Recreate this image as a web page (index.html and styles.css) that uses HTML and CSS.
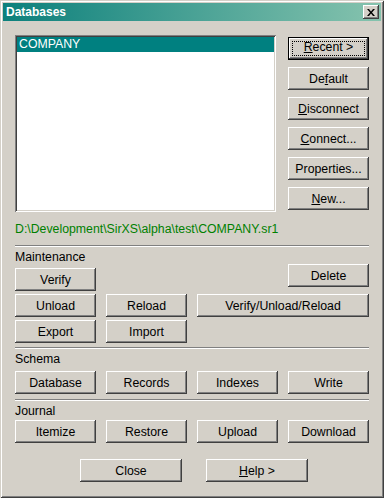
FILE: index.html
```html
<!DOCTYPE html>
<html lang="en">
<head>
    <meta charset="UTF-8">
    <meta name="viewport" content="width=device-width, initial-scale=1.0">
    <title>Databases</title>
    <link rel="stylesheet" href="styles.css">
</head>
<body>
    <div class="window">
        <div class="titlebar">
            <span class="title">Databases</span>
            <button class="close-btn" aria-label="Close">
                <svg width="8" height="7" viewBox="0 0 8 7">
                    <path d="M0 0h2l2 2.5L6 0h2L5 3.5 8 7H6L4 4.5 2 7H0l3-3.5z" fill="#000"/>
                </svg>
            </button>
        </div>

        <div class="content">
            <div class="top">
                <div class="listbox">
                    <div class="list-item selected">COMPANY</div>
                </div>
                <div class="side-buttons">
                    <button class="btn default"><span class="focus"><u>R</u>ecent &gt;</span></button>
                    <button class="btn">De<u>f</u>ault</button>
                    <button class="btn"><u>D</u>isconnect</button>
                    <button class="btn"><u>C</u>onnect...</button>
                    <button class="btn">Properties...</button>
                    <button class="btn"><u>N</u>ew...</button>
                </div>
            </div>

            <div class="path">D:\Development\SirXS\alpha\test\COMPANY.sr1</div>

            <div class="separator sep-first"></div>
            <div class="section-label">Maintenance</div>
            <div class="grid maintenance">
                <button class="btn verify">Verify</button>
                <button class="btn delete">Delete</button>
                <button class="btn">Unload</button>
                <button class="btn">Reload</button>
                <button class="btn wide">Verify/Unload/Reload</button>
                <button class="btn">Export</button>
                <button class="btn">Import</button>
            </div>

            <div class="separator"></div>
            <div class="section-label">Schema</div>
            <div class="grid schema">
                <button class="btn">Database</button>
                <button class="btn">Records</button>
                <button class="btn">Indexes</button>
                <button class="btn">Write</button>
            </div>

            <div class="separator"></div>
            <div class="section-label">Journal</div>
            <div class="grid journal">
                <button class="btn">Itemize</button>
                <button class="btn">Restore</button>
                <button class="btn">Upload</button>
                <button class="btn">Download</button>
            </div>

            <div class="footer">
                <button class="btn big">Close</button>
                <button class="btn big"><u>H</u>elp &gt;</button>
            </div>
        </div>
    </div>
</body>
</html>
```

FILE: styles.css
```css
body {
    margin: 0;
    font-family: 'Liberation Sans', Arial, sans-serif;
    font-size: 12.3px;
    background-color: #d4d0c8;
}

.window {
    width: 384px;
    height: 498px;
    box-sizing: border-box;
    padding: 3px;
    background-color: #d4d0c8;
    box-shadow: inset 1px 1px #d4d0c8, inset -1px -1px #404040,
                inset 2px 2px #ffffff, inset -2px -2px #808080;
    overflow: hidden;
}

.titlebar {
    height: 18px;
    display: flex;
    align-items: center;
    justify-content: space-between;
    padding: 0 2px 0 3px;
    background: linear-gradient(to right, #0c807c, #86c3ae);
}

.title {
    color: #ffffff;
    font-weight: bold;
    font-size: 12px;
}

.close-btn {
    width: 16px;
    height: 14px;
    padding: 0;
    border: none;
    display: flex;
    align-items: center;
    justify-content: center;
    background-color: #d4d0c8;
    box-shadow: inset -1px -1px #404040, inset 1px 1px #ffffff,
                inset -2px -2px #808080, inset 2px 2px #d4d0c8;
}

.content {
    padding: 0 12px;
}

.top {
    display: flex;
    justify-content: space-between;
    margin-top: 14px;
}

.listbox {
    width: 261px;
    height: 177px;
    box-sizing: border-box;
    padding: 2px;
    background-color: #ffffff;
    box-shadow: inset 1px 1px #808080, inset -1px -1px #ffffff,
                inset 2px 2px #404040, inset -2px -2px #d4d0c8;
}

.list-item {
    height: 15px;
    line-height: 15px;
    padding-left: 2px;
}

.list-item.selected {
    background-color: #008080;
    color: #ffffff;
}

.side-buttons {
    display: flex;
    flex-direction: column;
    gap: 7px;
    margin-top: 2px;
}

.btn {
    width: 81px;
    height: 23px;
    padding: 0;
    border: none;
    font-family: inherit;
    font-size: 12.3px;
    color: #000000;
    background-color: #d4d0c8;
    box-shadow: inset -1px -1px #404040, inset 1px 1px #ffffff,
                inset -2px -2px #808080, inset 2px 2px #d4d0c8;
}

.btn.default {
    box-shadow: inset 0 0 0 1px #000000, inset -2px -2px #404040,
                inset 2px 2px #ffffff, inset -3px -3px #808080;
    padding: 4px;
}

.focus {
    display: block;
    height: 100%;
    box-sizing: border-box;
    line-height: 13px;
    outline: 1px dotted #000000;
    outline-offset: -1px;
}

.path {
    margin-top: 10px;
    color: #008000;
    line-height: 14px;
}

.separator {
    height: 1px;
    border-top: 1px solid #808080;
    background-color: #ffffff;
}

.sep-first {
    margin-top: 9px;
}

.section-label {
    margin-top: 3px;
    line-height: 14px;
}

.grid {
    display: grid;
    grid-template-columns: repeat(4, 81px);
    column-gap: 10px;
    row-gap: 3px;
}

.maintenance {
    margin-bottom: 4px;
}

.maintenance .verify {
    margin-top: 4px;
}

.maintenance .delete {
    grid-column: 4;
}

.maintenance .wide {
    grid-column: 3 / span 2;
    width: auto;
}

.schema {
    margin-top: 5px;
    margin-bottom: 5px;
}

.journal {
    margin-top: 2px;
}

.footer {
    display: flex;
    justify-content: center;
    gap: 24px;
    margin-top: 16px;
    padding-left: 4px;
}

.btn.big {
    width: 102px;
}
```
